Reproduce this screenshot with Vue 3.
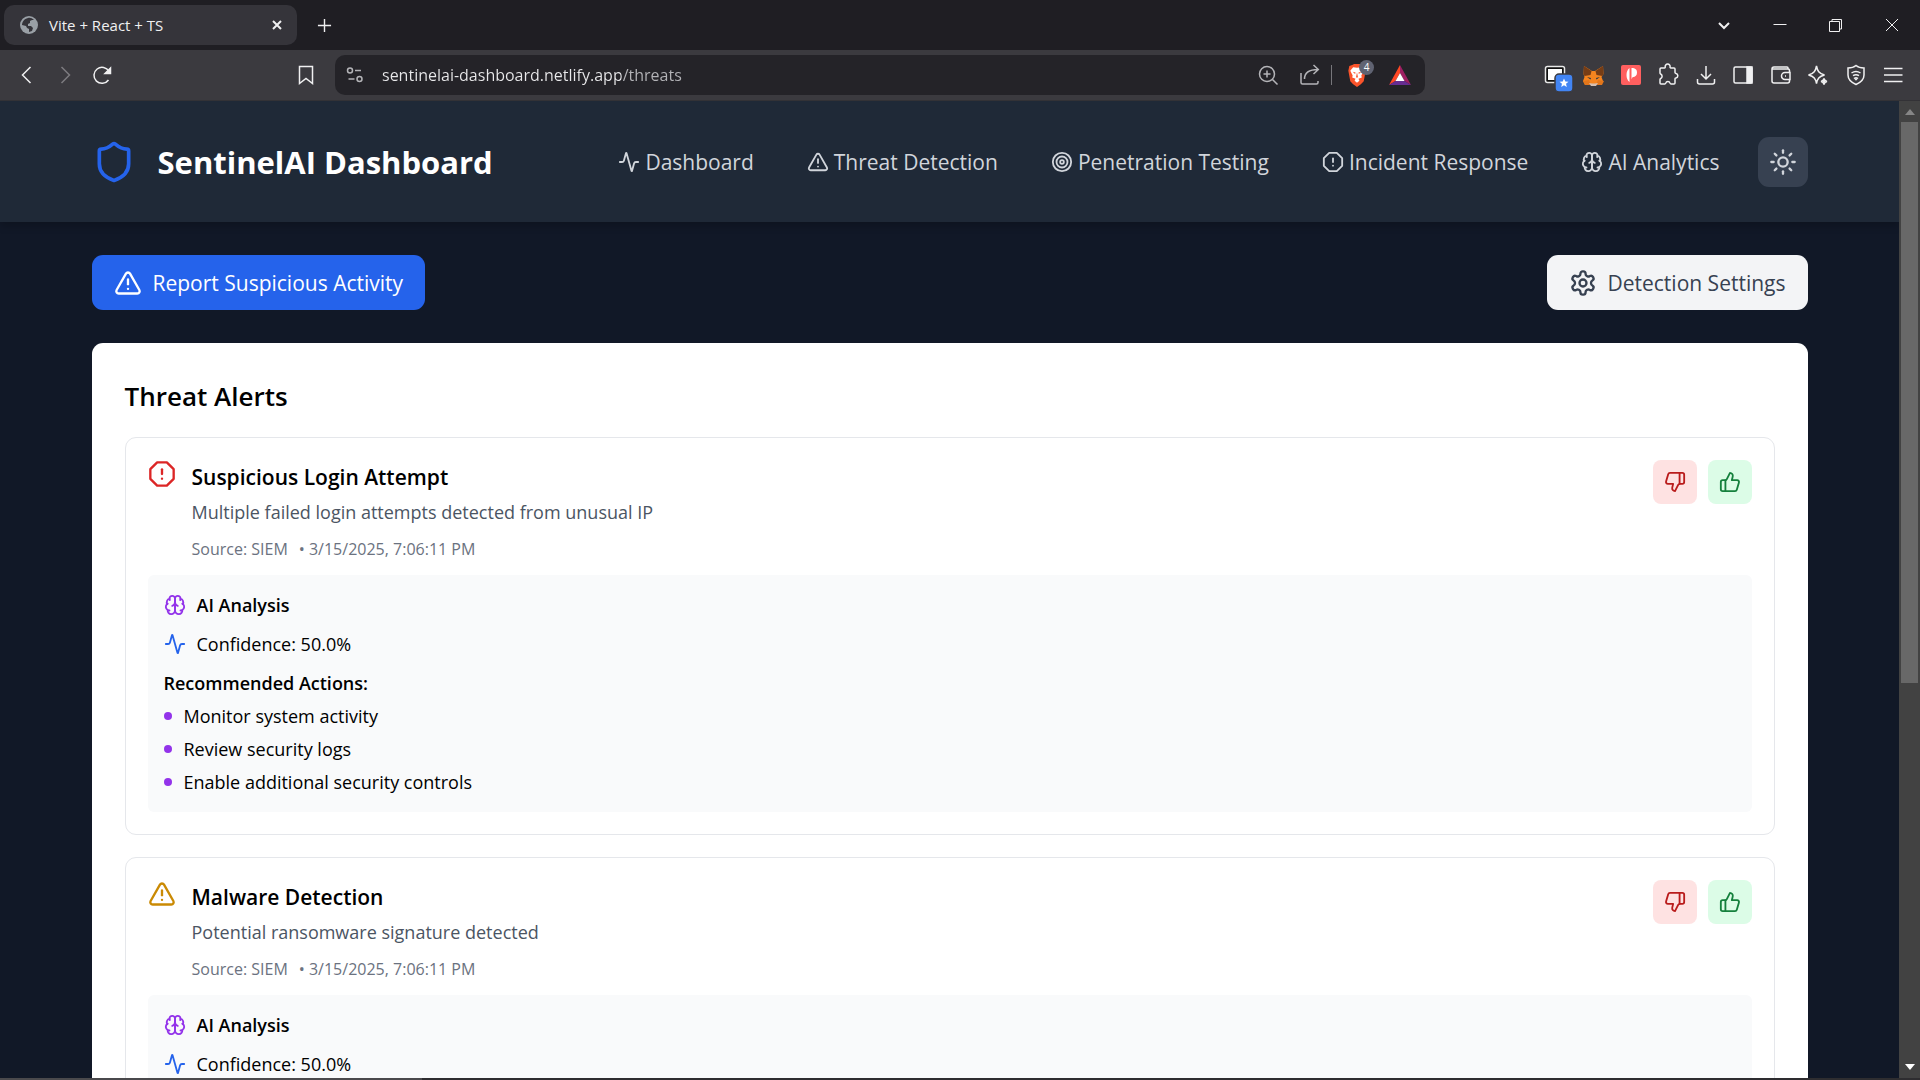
<script setup>
import { ref } from 'vue';

const tabTitle = ref('Vite + React + TS');
const url = ref('sentinelai-dashboard.netlify.app/threats');

const icons = {
  shield: '<path d="M20 13c0 5-3.5 7.5-7.66 8.95a1 1 0 0 1-.67-.01C7.5 20.5 4 18 4 13V6a1 1 0 0 1 1-1c2 0 4.5-1.2 6.24-2.72a1.17 1.17 0 0 1 1.52 0C14.51 3.81 17 5 19 5a1 1 0 0 1 1 1z"/>',
  activity: '<path d="M22 12h-2.48a2 2 0 0 0-1.93 1.46l-2.35 8.36a.25.25 0 0 1-.48 0L9.24 2.18a.25.25 0 0 0-.48 0l-2.35 8.36A2 2 0 0 1 4.49 12H2"/>',
  warning: '<path d="m21.73 18-8-14a2 2 0 0 0-3.48 0l-8 14A2 2 0 0 0 4 21h16a2 2 0 0 0 1.73-3"/><path d="M12 9v4"/><path d="M12 17h.01"/>',
  target: '<circle cx="12" cy="12" r="10"/><circle cx="12" cy="12" r="6"/><circle cx="12" cy="12" r="2"/>',
  octagon: '<path d="M7.86 2h8.28L22 7.86v8.28L16.14 22H7.86L2 16.14V7.86z"/><path d="M12 8v4"/><path d="M12 16h.01"/>',
  brain: '<path d="M12 5a3 3 0 1 0-5.997.125 4 4 0 0 0-2.526 5.77 4 4 0 0 0 .556 6.588A4 4 0 1 0 12 18Z"/><path d="M12 5a3 3 0 1 1 5.997.125 4 4 0 0 1 2.526 5.77 4 4 0 0 1-.556 6.588A4 4 0 1 1 12 18Z"/><path d="M15 13a4.5 4.5 0 0 1-3-4 4.5 4.5 0 0 1-3 4"/><path d="M17.599 6.5a3 3 0 0 0 .399-1.375"/><path d="M6.003 5.125A3 3 0 0 0 6.401 6.5"/><path d="M3.477 10.896a4 4 0 0 1 .585-.396"/><path d="M19.938 10.5a4 4 0 0 1 .585.396"/><path d="M6 18a4 4 0 0 1-1.967-.516"/><path d="M19.967 17.484A4 4 0 0 1 18 18"/>',
  sun: '<circle cx="12" cy="12" r="4"/><path d="M12 2v2"/><path d="M12 20v2"/><path d="m4.93 4.93 1.41 1.41"/><path d="m17.66 17.66 1.41 1.41"/><path d="M2 12h2"/><path d="M20 12h2"/><path d="m6.34 17.66-1.41 1.41"/><path d="m19.07 4.93-1.41 1.41"/>',
  settings: '<path d="M12.22 2h-.44a2 2 0 0 0-2 2v.18a2 2 0 0 1-1 1.73l-.43.25a2 2 0 0 1-2 0l-.15-.08a2 2 0 0 0-2.73.73l-.22.38a2 2 0 0 0 .73 2.73l.15.1a2 2 0 0 1 1 1.72v.51a2 2 0 0 1-1 1.74l-.15.09a2 2 0 0 0-.73 2.73l.22.38a2 2 0 0 0 2.73.73l.15-.08a2 2 0 0 1 2 0l.43.25a2 2 0 0 1 1 1.73V20a2 2 0 0 0 2 2h.44a2 2 0 0 0 2-2v-.18a2 2 0 0 1 1-1.73l.43-.25a2 2 0 0 1 2 0l.15.08a2 2 0 0 0 2.73-.73l.22-.39a2 2 0 0 0-.73-2.73l-.15-.08a2 2 0 0 1-1-1.74v-.5a2 2 0 0 1 1-1.74l.15-.09a2 2 0 0 0 .73-2.73l-.22-.38a2 2 0 0 0-2.73-.73l-.15.08a2 2 0 0 1-2 0l-.43-.25a2 2 0 0 1-1-1.73V4a2 2 0 0 0-2-2z"/><circle cx="12" cy="12" r="3"/>',
  thumbsDown: '<path d="M17 14V2"/><path d="M9 18.12 10 14H4.17a2 2 0 0 1-1.92-2.56l2.33-8A2 2 0 0 1 6.5 2H20a2 2 0 0 1 2 2v8a2 2 0 0 1-2 2h-2.76a2 2 0 0 0-1.79 1.11L12 22a3.13 3.13 0 0 1-3-3.88Z"/>',
  thumbsUp: '<path d="M7 10v12"/><path d="M15 5.88 14 10h5.83a2 2 0 0 1 1.92 2.56l-2.33 8A2 2 0 0 1 17.5 22H4a2 2 0 0 1-2-2v-8a2 2 0 0 1 2-2h2.76a2 2 0 0 0 1.79-1.11L12 2a3.13 3.13 0 0 1 3 3.88Z"/>'
};

const navItems = [
  { label: 'Dashboard', icon: 'activity' },
  { label: 'Threat Detection', icon: 'warning' },
  { label: 'Penetration Testing', icon: 'target' },
  { label: 'Incident Response', icon: 'octagon' },
  { label: 'AI Analytics', icon: 'brain' }
];

const recommendedActions = [
  'Monitor system activity',
  'Review security logs',
  'Enable additional security controls'
];

const alerts = ref([
  {
    id: 1,
    title: 'Suspicious Login Attempt',
    description: 'Multiple failed login attempts detected from unusual IP',
    source: 'SIEM',
    timestamp: '3/15/2025, 7:06:11 PM',
    severity: 'high',
    confidence: 0.5,
    actions: recommendedActions
  },
  {
    id: 2,
    title: 'Malware Detection',
    description: 'Potential ransomware signature detected',
    source: 'SIEM',
    timestamp: '3/15/2025, 7:06:11 PM',
    severity: 'medium',
    confidence: 0.5,
    actions: recommendedActions
  }
]);

const formatConfidence = (value) => `${(value * 100).toFixed(1)}%`;

// toolbar buttons on the right, drawn in a 28x28 box
const extensions = [
  {
    name: 'Screen capture',
    art: '<rect x="3.5" y="5.500" width="19" height="16" rx="2" fill="#111" stroke="#e8e8e8"/><rect x="6" y="8" width="14" height="11" fill="#fff" stroke="none"/><rect x="13" y="13" width="18" height="18" rx="4" fill="#4285f4" stroke="#3b3a3f"/><path d="m22 17.500 1.300 3 3.200.2-2.500 2 .8 3.200-2.800-1.700-2.800 1.700.8-3.200-2.500-2 3.200-.2z" fill="#fff" stroke="none"/>'
  },
  {
    name: 'Wallet fox',
    art: '<g stroke="none"><path d="m5 5 8 5h3l8-5 .5 8-2 3 1.500 4-2 4-5-1-2 1.500h-2L11 23l-5 1-2-4 1.500-4-1-3z" fill="#f5841f"/><path d="m5 5 7.500 5-1 4-6 1-1-2zM24 5l-7.500 5 1 4 6 1 1-2z" fill="#763d16"/><path d="m4 20 6-1 2 5-6 0zM25 20l-6-1-2 5 6 0z" fill="#e2761b"/><path d="m10 22 3 .5h3l3-.5-2 3h-5z" fill="#d5bfb2"/><path d="m8 16 4 1-.5 1.500zM21 16l-4 1 .5 1.500z" fill="#233447"/></g>'
  },
  {
    name: 'Password manager',
    art: '<rect x="4" y="4" width="20" height="20" rx="2" fill="#ff5f5f" stroke="none"/><path d="M12.500 7v14c-2-1.500-3-4-3-7s1-5.500 3-7zM14.500 7c4 0 5.500 1.600 5.500 4.600S18.500 16 15.500 16.200l-1 2z" fill="#fff" stroke="none"/>'
  },
  {
    name: 'Extensions',
    art: '<path d="M7 7h3.500c.6 0 .8-.5.7-1a2.500 2.500 0 1 1 4.900 0c-.1.500.1 1 .7 1H20a1 1 0 0 1 1 1v3.500c0 .6.500.8 1 .9a2.300 2.300 0 0 1 0 4.500c-.5.1-1 .3-1 .9V22a1 1 0 0 1-1 1h-3c-.6 0-.8-.5-1-1a2.200 2.200 0 0 0-4.200 0c-.2.500-.4 1-1 1H7a1 1 0 0 1-1-1v-3.500c0-.5.3-.8.7-1a2.500 2.500 0 0 0 0-4.500c-.4-.2-.7-.5-.7-1V8a1 1 0 0 1 1-1z"/>'
  },
  { name: 'Downloads', art: '<path d="M14 5v13m-5-5 5 5 5-5M5.500 18v3a2 2 0 0 0 2 2h13a2 2 0 0 0 2-2v-3"/>' },
  { name: 'Sidebar', art: '<rect x="5" y="6" width="18" height="16" rx="1.500"/><path d="M18 6h5v16h-5z" fill="#f0f0f1"/>' },
  {
    name: 'Wallet',
    art: '<path d="M22.500 11V9.500a1.500 1.500 0 0 0-1.500-1.500H5.500M21 8V7a1 1 0 0 0-1-1H7a2 2 0 0 0-2 2v12a2 2 0 0 0 2 2h13.500a2 2 0 0 0 2-2v-1"/><path d="M23 11.500h-5a3.500 3.500 0 0 0 0 7h5z"/><path d="M18 15h1"/>'
  },
  {
    name: 'Leo AI',
    art: '<path d="M12.500 5c.9 4.800 2.400 7.600 8 9-5.600 1.400-7.100 3.600-8 8.500-.9-4.900-2.400-7.100-8-8.500 5.600-1.400 7.100-4.200 8-9z"/><path d="M20 17.500c.4 2.200 1 2.600 3 3-2 .4-2.600.8-3 3-.4-2.200-1-2.600-3-3 2-.4 2.600-.8 3-3z" fill="#f0f0f1"/>'
  },
  {
    name: 'VPN',
    art: '<path d="M14 4.500c2 1.700 5 2.500 8 2.500v7c0 4.500-3.500 7.500-8 9.500-4.500-2-8-5-8-9.500V7c3 0 6-.8 8-2.500z"/><path d="M9.500 12c3-2 6-2 9 0M11 14.700c2-1.300 4-1.300 6 0M12.700 17.200c.9-.5 1.700-.5 2.600 0l-1.300 1.500z"/>'
  },
  { name: 'Menu', art: '<path d="M5 7.500h18.500M5 14h18.500M5 20.500h18.500"/>' }
];
</script>

<template>
  <div class="window">
    <!-- Tab strip -->
    <div class="tab-strip">
      <div class="tab">
        <svg class="favicon" viewBox="0 0 18 18">
          <circle cx="9" cy="9" r="9" fill="#9aa0a6" />
          <path d="M8 2C4 3 2 6 2 9l4 1 1 2 2 1v3l3-1 1-3-2-2H8V8l2-1V5l2-1 2 0c-2-2-4-2.500-6-2z" fill="#35343a" />
        </svg>
        <span class="tab-title">{{ tabTitle }}</span>
        <button class="tab-close" aria-label="Close tab">
          <svg viewBox="0 0 12 12"><path d="m2 2 8 8M10 2l-8 8" /></svg>
        </button>
      </div>
      <button class="new-tab" aria-label="New tab">
        <svg viewBox="0 0 16 16"><path d="M8 1v14M1 8h14" /></svg>
      </button>
      <div class="window-controls">
        <button aria-label="Search tabs">
          <svg class="bold" viewBox="0 0 16 16"><path d="m3 6 5 5 5-5" /></svg>
        </button>
        <button aria-label="Minimize">
          <svg viewBox="0 0 16 16"><path d="M1.500 7.500h13" /></svg>
        </button>
        <button aria-label="Restore">
          <svg viewBox="0 0 16 16"><path d="M1.500 4.500h10v10h-10zM4 4.500v-2h9.500V12h-2" /></svg>
        </button>
        <button aria-label="Close">
          <svg viewBox="0 0 16 16"><path d="m2 2 12 12M14 2 2 14" /></svg>
        </button>
      </div>
    </div>

    <!-- Toolbar -->
    <div class="toolbar">
      <div class="history">
        <button aria-label="Back"><svg viewBox="0 0 24 24"><path d="m15.500 4-8 8 8 8" /></svg></button>
        <button class="disabled" aria-label="Forward" disabled>
          <svg viewBox="0 0 24 24"><path d="m8.500 4 8 8-8 8" /></svg>
        </button>
        <button aria-label="Reload">
          <svg viewBox="0 0 24 24">
            <path d="M17.500 17A8 8 0 1 1 18 8.500" />
            <path d="M19.500 5v5.500h-5.500z" fill="currentColor" />
          </svg>
        </button>
      </div>
      <button class="bookmark" aria-label="Bookmark this page">
        <svg viewBox="0 0 24 24"><path d="M5.500 3.500h13v17L12 15.500l-6.500 5z" /></svg>
      </button>
      <div class="address-bar">
        <svg class="site-info" viewBox="0 0 20 20">
          <circle cx="5" cy="5.500" r="2.500" /><path d="M10 5.500h6" />
          <circle cx="14.500" cy="14" r="2.500" /><path d="M3.500 14h6" />
        </svg>
        <input v-model="url" class="url" type="text" aria-label="Address" />
        <svg class="bar-icon" viewBox="0 0 24 24">
          <circle cx="11" cy="11" r="7.500" /><path d="m16.500 16.500 5 5M11 7.500v7M7.500 11h7" />
        </svg>
        <svg class="bar-icon" viewBox="0 0 24 24">
          <path d="M3 10v9.500a1.500 1.500 0 0 0 1.500 1.500h14a1.500 1.500 0 0 0 1.500-1.500V18M6.500 16c0-6 4-9.500 13.500-9.500M15.500 2l4.800 4.500-4.800 4.500" />
        </svg>
        <span class="divider"></span>
        <span class="brave">
          <svg viewBox="0 0 22 26">
            <path d="m6 2 2-1h6l2 1 3 1 1 5-2 11-3 3-4 3-4-3-3-3L2 8l1-5z" fill="#fb542b" />
            <path d="m11 5 4-.5 3 3.500-2.500 5 .5 2-3.500 1.500 1 2-2.500 2-2.500-2 1-2L6 15l.5-2L4 8l3-3.500z" fill="#fff" />
            <path d="m6.500 9 3 1-.5 1.500zM15.500 9l-3 1 .5 1.500zM11 10l1 4.500-1 1-1-1z" fill="#fb542b" />
          </svg>
          <span class="brave-count">4</span>
        </span>
        <svg class="rewards" viewBox="0 0 24 22">
          <path d="M12 1 1 21l6.500-4L12 9z" fill="#ff4724" />
          <path d="M12 1v8l4.500 8 6.500 4z" fill="#9e1f63" />
          <path d="M1 21h22l-6.500-4h-9z" fill="#662d91" />
          <path d="m12 9-4.500 8h9z" fill="#fff" />
        </svg>
      </div>
      <div class="extensions">
        <button v-for="ext in extensions" :key="ext.name" :aria-label="ext.name">
          <svg viewBox="0 0 28 28" v-html="ext.art"></svg>
        </button>
      </div>
    </div>

    <div class="viewport">
      <div class="page">
        <!-- Header -->
        <header class="site-header">
          <div class="container header-inner">
            <div class="brand">
              <svg class="icon logo" viewBox="0 0 24 24" v-html="icons.shield"></svg>
              <h1>SentinelAI Dashboard</h1>
            </div>
            <nav>
              <a v-for="item in navItems" :key="item.label" href="#">
                <svg class="icon" viewBox="0 0 24 24" v-html="icons[item.icon]"></svg>
                {{ item.label }}
              </a>
              <button class="theme-toggle" aria-label="Toggle theme">
                <svg class="icon icon-lg" viewBox="0 0 24 24" v-html="icons.sun"></svg>
              </button>
            </nav>
          </div>
        </header>

        <main class="container">
          <div class="actions-bar">
            <button class="btn btn-primary">
              <svg class="icon icon-lg" viewBox="0 0 24 24" v-html="icons.warning"></svg>
              Report Suspicious Activity
            </button>
            <button class="btn btn-light">
              <svg class="icon icon-lg" viewBox="0 0 24 24" v-html="icons.settings"></svg>
              Detection Settings
            </button>
          </div>

          <section class="card">
            <h2>Threat Alerts</h2>
            <article v-for="alert in alerts" :key="alert.id" class="alert">
              <div class="alert-head">
                <svg
                  class="icon icon-lg"
                  :class="alert.severity"
                  viewBox="0 0 24 24"
                  v-html="alert.severity === 'high' ? icons.octagon : icons.warning"
                ></svg>
                <div class="alert-text">
                  <h3>{{ alert.title }}</h3>
                  <p class="description">{{ alert.description }}</p>
                  <p class="meta">
                    <span>Source: {{ alert.source }}</span>
                    <span>• {{ alert.timestamp }}</span>
                  </p>
                </div>
                <div class="feedback">
                  <button class="down" aria-label="False positive">
                    <svg class="icon" viewBox="0 0 24 24" v-html="icons.thumbsDown"></svg>
                  </button>
                  <button class="up" aria-label="Confirm threat">
                    <svg class="icon" viewBox="0 0 24 24" v-html="icons.thumbsUp"></svg>
                  </button>
                </div>
              </div>

              <!-- AI analysis -->
              <div class="analysis">
                <div class="row strong">
                  <svg class="icon brain" viewBox="0 0 24 24" v-html="icons.brain"></svg>
                  AI Analysis
                </div>
                <div class="row">
                  <svg class="icon pulse" viewBox="0 0 24 24" v-html="icons.activity"></svg>
                  Confidence: {{ formatConfidence(alert.confidence) }}
                </div>
                <div>
                  <h4>Recommended Actions:</h4>
                  <ul>
                    <li v-for="action in alert.actions" :key="action">{{ action }}</li>
                  </ul>
                </div>
              </div>
            </article>
          </section>
        </main>
      </div>

      <!-- Scrollbar -->
      <div class="scrollbar">
        <svg class="arrow dim" viewBox="0 0 10 6"><path d="M5 0 0 6h10z" /></svg>
        <div class="track"><div class="thumb"></div></div>
        <svg class="arrow" viewBox="0 0 10 6"><path d="m5 6-5-6h10z" /></svg>
      </div>
    </div>
    <div class="window-edge"></div>
  </div>
</template>

<style>
body {
  background: #111827;
  overflow: hidden;
}
</style>

<style scoped>
* { box-sizing: border-box; }

.window {
  height: 100vh;
  display: flex;
  flex-direction: column;
  font-family: 'Segoe UI', 'Open Sans', 'Noto Sans', sans-serif;
  overflow: hidden;
}

h1, h2, h3, h4, p, ul { margin: 0; padding: 0; }
button { border: none; background: none; padding: 0; font-family: inherit; cursor: pointer; }

/* Browser chrome */
.tab-strip, .toolbar { display: flex; align-items: center; flex: none; height: 50px; color: #f0f0f1; }
.tab-strip { background: #1f1e23; padding-left: 4px; }
.tab-strip button, .toolbar button {
  display: flex; align-items: center; justify-content: center; color: inherit;
}
.tab-strip svg, .toolbar svg { fill: none; stroke: currentColor; stroke-width: 1.5; }

.tab {
  display: flex; align-items: center; width: 293px; height: 40px;
  padding: 0 14px 0 16px; background: #35343a; border-radius: 10px;
}
.tab .favicon { width: 18px; height: 18px; stroke: none; }
.tab-title { flex: 1; margin-left: 11px; font-size: 15px; line-height: 20px; }
.tab-close svg { width: 12px; height: 12px; stroke-width: 2; }
.new-tab { width: 54px; height: 40px; }
.new-tab svg { width: 15px; height: 15px; }

.window-controls { margin-left: auto; display: flex; }
.window-controls button { width: 56px; height: 50px; }
.window-controls svg { width: 16px; height: 16px; stroke-width: 1; }
.window-controls svg.bold { stroke-width: 2; }

.toolbar { height: 51px; background: #3b3a3f; border-bottom: 1px solid #333236; padding: 0 13px 0 8px; }
.history { display: flex; }
.history button { width: 38px; height: 40px; }
.history svg, .bookmark svg { width: 24px; height: 24px; }
.history .disabled { color: #7d7c80; }
.bookmark { width: 40px; height: 40px; margin-left: 164px; }

.address-bar {
  flex: 1; display: flex; align-items: center; height: 40px;
  margin: 0 117px 0 9px; padding: 0 13px 0 10px;
  background: #242328; border-radius: 10px; color: #b4b4b8;
}
.site-info { width: 20px; height: 20px; }
.url {
  flex: 1; min-width: 0; height: 30px; margin-left: 17px; padding: 0; border: none; outline: none;
  font-family: inherit; font-size: 16px; color: transparent;
  background: linear-gradient(90deg, #e9e9eb 239px, #b4b4b8 239px);
  background-clip: text;
}
.bar-icon { width: 24px; height: 24px; margin-right: 18px; }
.bar-icon + .bar-icon { margin-right: 9px; }
.divider { width: 1px; height: 20px; background: #77767b; }
.brave { position: relative; display: flex; margin: 0 20px 0 14px; }
.brave svg { width: 22px; height: 25px; stroke: none; }
.brave-count {
  position: absolute; top: -3px; left: 13px; width: 15px; height: 15px; border-radius: 8px;
  background: #606372; color: #fff; font-size: 10px; line-height: 15px; text-align: center;
}
.rewards { width: 24px; height: 22px; }
.toolbar .rewards { stroke: none; }
.extensions { flex: 0 0 365px; display: flex; justify-content: space-between; }
.extensions svg { width: 28px; height: 28px; overflow: visible; }

/* Page */
.viewport { flex: 1; min-height: 0; display: flex; }
.page { flex: 1; min-width: 0; overflow: hidden; background: #111827; }
.container { max-width: 1760px; margin: 0 auto; padding: 0 22px; }

.icon {
  flex: none; width: 22px; height: 22px; fill: none; stroke: currentColor;
  stroke-width: 2; stroke-linecap: round; stroke-linejoin: round;
}
.icon-lg { width: 28px; height: 28px; }

.site-header { background: #1f2937; box-shadow: 0 4px 8px rgba(0, 0, 0, 0.2); }
.header-inner { display: flex; justify-content: space-between; align-items: center; height: 121px; }
.brand { display: flex; align-items: center; gap: 22px; color: #fff; }
.brand h1 { font-size: 31px; line-height: 44px; font-weight: 700; }
.logo { width: 44px; height: 44px; color: #2563eb; }

nav { display: flex; align-items: center; gap: 53px; }
nav a {
  display: flex; align-items: center; gap: 5px; color: #d1d5db;
  font-size: 21px; line-height: 32px; text-decoration: none; white-space: nowrap;
}
.theme-toggle {
  display: flex; align-items: center; justify-content: center; width: 50px; height: 50px;
  margin-left: -15px; border-radius: 11px; background: #374151; color: #d1d5db;
}

.actions-bar { display: flex; justify-content: space-between; padding: 33px 0; }
.btn {
  display: flex; align-items: center; gap: 11px; height: 55px; padding: 0 22px;
  border-radius: 11px; font-size: 21px; line-height: 38px;
}
/* .btn needs to win over the reset above */
button.btn { padding: 0 22px; }
.btn-primary { background: #2563eb; color: #fff; }
.btn-light { background: #f3f4f6; color: #374151; }

.card { background: #fff; border-radius: 11px; padding: 33px; color: #000; }
.card h2 { font-size: 26px; line-height: 40px; font-weight: 600; margin-bottom: 21px; }

.alert { border: 1px solid #e5e7eb; border-radius: 11px; padding: 22px; margin-bottom: 22px; }
.alert-head { display: flex; align-items: flex-start; gap: 16px; margin-bottom: 14px; }
.high { color: #dc2626; }
.medium { color: #ca8a04; }
.alert-text { flex: 1; }
.alert-text h3 { font-size: 21px; line-height: 34px; font-weight: 600; }
.description { margin-top: 4px; font-size: 18px; line-height: 28px; color: #4b5563; }
.meta { display: flex; gap: 11px; margin-top: 11px; font-size: 16px; line-height: 24px; color: #6b7280; }

.feedback { display: flex; gap: 11px; }
.feedback button {
  display: flex; align-items: center; justify-content: center;
  width: 44px; height: 44px; border-radius: 8px;
}
.down { background: #fee2e2; color: #b91c1c; }
.up { background: #dcfce7; color: #15803d; }

.analysis {
  display: flex; flex-direction: column; gap: 11px; padding: 16px;
  background: #f9fafb; border-radius: 6px; font-size: 18px; line-height: 28px;
}
.row { display: flex; align-items: center; gap: 11px; }
.strong, .analysis h4 { font-size: 18px; font-weight: 600; }
.brain { color: #9333ea; }
.pulse { color: #2563eb; }
.analysis ul { list-style: none; }
.analysis li { display: flex; align-items: center; gap: 12px; margin-top: 5px; }
.analysis li::before { content: ''; width: 8px; height: 8px; border-radius: 50%; background: #9333ea; }

/* Scrollbar */
.scrollbar {
  flex: none; width: 21px; display: flex; flex-direction: column; align-items: center;
  padding: 8px 0; background: #424242;
}
.arrow { width: 10px; height: 6px; fill: #fff; }
.arrow.dim { fill: #868686; }
.track { flex: 1; width: 17px; padding: 7px 0; }
.thumb { height: 60%; background: #686868; }

.window-edge { flex: none; height: 2px; background: linear-gradient(90deg, #4a494c 22%, #2e2d30 22%); }
</style>
